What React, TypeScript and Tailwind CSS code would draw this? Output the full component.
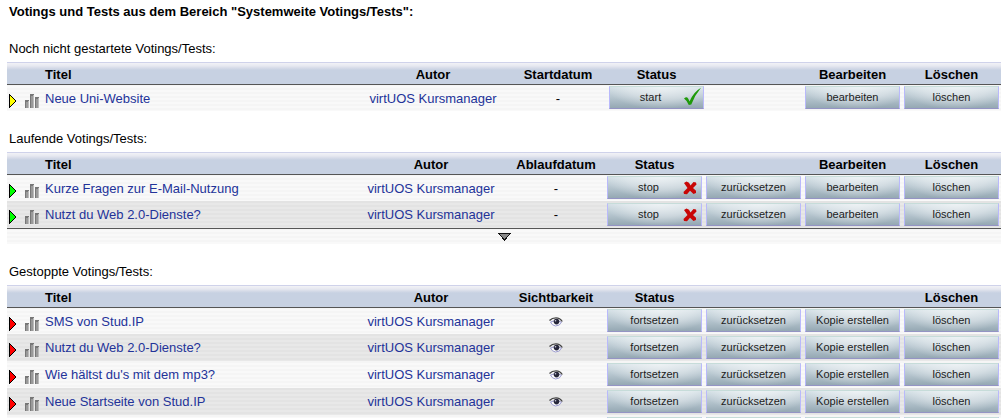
import { clsx } from "clsx";

type Mark = "check" | "cross";

interface Row {
  title: string;
  visible?: boolean;
  actions: (string | null)[];
  mark?: Mark;
}

interface Section {
  label: string;
  headers: string[];
  arrow: string;
  rows: Row[];
  wideStatus?: boolean;
  more?: boolean;
  continued?: boolean;
}

const STOPPED = ["fortsetzen", "zurücksetzen", "Kopie erstellen", "löschen"];
const RUNNING = ["stop", "zurücksetzen", "bearbeiten", "löschen"];

const SECTIONS: Section[] = [
  {
    label: "Noch nicht gestartete Votings/Tests:",
    headers: ["Autor", "Startdatum", "Status", "", "Bearbeiten", "Löschen"],
    arrow: "#ffff00",
    wideStatus: true,
    rows: [
      { title: "Neue Uni-Website", actions: ["start", null, "bearbeiten", "löschen"], mark: "check" },
    ],
  },
  {
    label: "Laufende Votings/Tests:",
    headers: ["Autor", "Ablaufdatum", "Status", "", "Bearbeiten", "Löschen"],
    arrow: "#00ff00",
    more: true,
    rows: [
      { title: "Kurze Fragen zur E-Mail-Nutzung", actions: RUNNING, mark: "cross" },
      { title: "Nutzt du Web 2.0-Dienste?", actions: RUNNING, mark: "cross" },
    ],
  },
  {
    label: "Gestoppte Votings/Tests:",
    headers: ["Autor", "Sichtbarkeit", "Status", "", "", "Löschen"],
    arrow: "#ff0000",
    continued: true,
    rows: [
      { title: "SMS von Stud.IP", visible: true, actions: STOPPED },
      { title: "Nutzt du Web 2.0-Dienste?", visible: true, actions: STOPPED },
      { title: "Wie hältst du's mit dem mp3?", visible: true, actions: STOPPED },
      { title: "Neue Startseite von Stud.IP", visible: true, actions: STOPPED },
    ],
  },
];

const LIGHT_ROW =
  "bg-[repeating-linear-gradient(180deg,#f5f5f5_0px,#f5f5f5_2px,#f9f9f9_2px,#f9f9f9_4px)]";
const DARK_ROW =
  "bg-[repeating-linear-gradient(180deg,#e3e3e3_0px,#e3e3e3_2px,#e8e8e8_2px,#e8e8e8_4px)]";
const BUTTON =
  "relative mx-auto block h-[23px] w-[95px] border border-[#b9b9fb] border-t-[#c6dcd9] border-b-[#9494c4] bg-[radial-gradient(ellipse_at_55%_0%,#ffffff99_0%,#ffffff55_45%,#ffffff00_75%),linear-gradient(180deg,#d3dfe5_0%,#b9c8d1_45%,#95a8b3_100%)]";

function Arrow({ color }: { color: string }) {
  return (
    <svg width="8" height="14" viewBox="0 0 8 14" shapeRendering="crispEdges">
      <path d="M0.5 0.5 L7 7 L0.5 13.5 Z" fill={color} stroke="#000" />
    </svg>
  );
}

function Bars() {
  return (
    <svg width="14" height="14" viewBox="0 0 14 14" shapeRendering="crispEdges">
      <path d="M0 6h4v8H0zM5 0h4v14H5zM10 3h4v11h-4z" fill="#777" />
      <path d="M1 8h2v6H1zM6 2h2v12H6zM11 5h2v9h-2z" fill="#999" />
      <path d="M3 7h1v7H3zM8 1h1v13H8zM13 4h1v10h-1z" fill="#bbb" />
    </svg>
  );
}

function Eye() {
  return (
    <svg className="mx-auto" width="14" height="10" viewBox="0 0 14 10">
      <path d="M1.5 5 Q6 2 12.5 5 Q11 9 6.500 9 Q3 8.500 1.5 5Z" fill="#fff" stroke="#9c9cd0" />
      <path d="M0.5 3.500 Q3 0.8 7 0.8 Q11 0.8 13.3 4.500" fill="none" stroke="#444" strokeWidth="1.3" />
      <circle cx="7.5" cy="4.6" r="2.8" fill="#27273a" />
      <circle cx="6.5" cy="3.8" r="0.8" fill="#ccd" />
    </svg>
  );
}

function MarkIcon({ mark }: { mark: Mark }) {
  if (mark === "check") {
    return (
      <svg className="absolute top-0 right-px" width="19" height="20" viewBox="0 0 19 20">
        <path d="M1 11.500 Q3 9.800 4.300 10.500 Q5.500 11.500 6.500 14.500 Q10.500 5 18 0.800 Q12 8 8.300 17.500 L5.800 18 Q4 13.500 1 11.500Z" fill="#1f9a0a" />
      </svg>
    );
  }
  return (
    <svg className="absolute top-1 right-1" width="14" height="14" viewBox="0 0 14 14">
      <path d="M1 2 L3.500 0.500 L6 1.800 L7.500 4.500 L10.500 1 L13 1.500 L13.500 3.500 L10 7 L13 9.800 L13 12 L10.500 13 L7 9.800 L4 13.300 L1 13 L0.500 11 L4.500 7 Z" fill="#c80606" />
    </svg>
  );
}

function ActionButton({ label, mark }: { label: string; mark?: Mark }) {
  return (
    <button type="button" className={clsx(BUTTON, "pb-px text-[11px] leading-[20px] text-[#1c1c1c]", mark && "pr-3")}>
      {label}
      {mark && <MarkIcon mark={mark} />}
    </button>
  );
}

function VotingTable({ section }: { section: Section }) {
  return (
    <table className="w-full table-fixed border-separate border-spacing-0" aria-label={section.label}>
      <colgroup>
        <col className="w-[38px]" />
        <col />
        <col className="w-[152px]" />
        <col className="w-[98px]" />
        <col className="w-[99px]" />
        <col className={section.wideStatus ? "w-[97px]" : "w-[99px]"} />
        <col className="w-[99px]" />
        <col className="w-[99px]" />
      </colgroup>
      <thead>
        <tr className="h-[22px] bg-[linear-gradient(180deg,#cfd2ea_0px,#cfd2ea_1px,#f2f2f6_1px,#e6e8f0_4px,#d6dbe8_6px,#c7d1e2_8px)] leading-[18px]">
          <th className="p-0" />
          <th className="p-0 pt-1 text-left">Titel</th>
          {section.headers.map((header, i) => (
            <th key={i} className="p-0 pt-1">{header}</th>
          ))}
        </tr>
      </thead>
      <tbody className="[&>tr:first-child>td]:border-t [&>tr:first-child>td]:border-[#555]">
        {section.rows.map((row, i) => (
          <tr key={row.title} className={clsx("text-center", i % 2 ? DARK_ROW : LIGHT_ROW)}>
            <td className="h-[27px] p-0">
              <div className="flex items-center gap-2 pt-[5px] pl-[2px]">
                <Arrow color={section.arrow} />
                <Bars />
              </div>
            </td>
            <td className="p-0 pt-px text-left">
              <a href="#" className="text-[#233399]">{row.title}</a>
            </td>
            <td className="p-0 pt-px">
              <a href="#" className="text-[#233399]">virtUOS Kursmanager</a>
            </td>
            <td className="p-0 pt-px">{row.visible ? <Eye /> : "-"}</td>
            {row.actions.map((action, k) => (
              <td key={k} className={clsx("p-0 align-top", i === 0 ? "pt-px" : "pt-[2px]")}>
                {action && <ActionButton label={action} mark={k === 0 ? row.mark : undefined} />}
              </td>
            ))}
          </tr>
        ))}
        {section.continued && (
          <tr className={LIGHT_ROW}>
            <td colSpan={4} className="h-[27px] p-0" />
            {STOPPED.map((action) => (
              <td key={action} className="p-0 pt-[2px] align-top">
                <div className={BUTTON} />
              </td>
            ))}
          </tr>
        )}
      </tbody>
      {section.more && (
        <tfoot>
          <tr className={LIGHT_ROW}>
            <td colSpan={8} className="h-[16px] border-t border-[#555] p-0">
              <button type="button" aria-label="Mehr" className="mx-auto block">
                <svg width="13" height="8" viewBox="0 0 13 8" shapeRendering="crispEdges">
                  <path d="M0.500 0.500 H12.500 L6.500 7 Z" fill="#888" stroke="#111" />
                </svg>
              </button>
            </td>
          </tr>
        </tfoot>
      )}
    </table>
  );
}

export default function App() {
  return (
    <main className="h-screen overflow-hidden bg-white pt-1 pr-[5px] pl-[7px] font-['Liberation_Sans',Arial,sans-serif] text-[13px] leading-[16px] text-black">
      <h1 className="pl-[2px] font-bold">
        Votings und Tests aus dem Bereich "Systemweite Votings/Tests":
      </h1>
      <div className="flex flex-col gap-5 pt-[21px]">
        {SECTIONS.map((section) => (
          <section key={section.label}>
            <h2 className="pb-[5px] pl-[2px]">{section.label}</h2>
            <VotingTable section={section} />
          </section>
        ))}
      </div>
    </main>
  );
}
